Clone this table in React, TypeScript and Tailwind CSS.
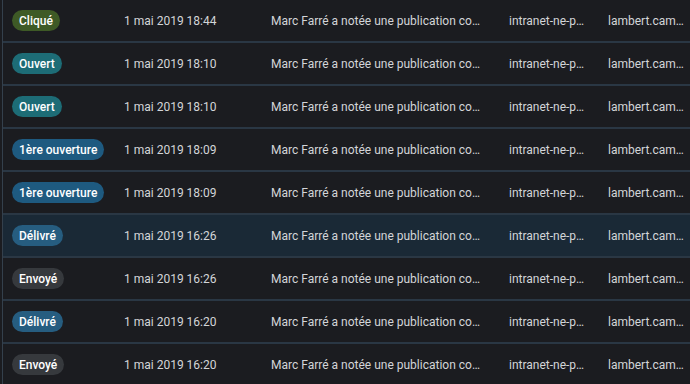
import React from "react";

type Status = "Cliqué" | "Ouvert" | "1ère ouverture" | "Délivré" | "Envoyé";

const badgeClass: Record<Status, string> = {
  "Cliqué": "bg-[#3e5a26]",
  "Ouvert": "bg-[#1d6c76]",
  "1ère ouverture": "bg-[#1e5a80]",
  "Délivré": "bg-[#265d80]",
  "Envoyé": "bg-[#36393d]",
};

const rows: { status: Status; date: string; active?: boolean }[] = [
  { status: "Cliqué", date: "1 mai 2019 18:44" },
  { status: "Ouvert", date: "1 mai 2019 18:10" },
  { status: "Ouvert", date: "1 mai 2019 18:10" },
  { status: "1ère ouverture", date: "1 mai 2019 18:09" },
  { status: "1ère ouverture", date: "1 mai 2019 18:09" },
  { status: "Délivré", date: "1 mai 2019 16:26", active: true },
  { status: "Envoyé", date: "1 mai 2019 16:26" },
  { status: "Délivré", date: "1 mai 2019 16:20" },
  { status: "Envoyé", date: "1 mai 2019 16:20" },
];

export default function App() {
  return (
    <div
      className="w-[690px] h-[384px] overflow-hidden bg-[#1b1c20] text-[12px] text-[#d3d5d8]"
      style={{ fontFamily: "Roboto, 'Liberation Sans', sans-serif" }}
    >
      <div className="border-l border-[#34404c] ml-[2px]">
        {rows.map((row, i) => (
          <div
            key={i}
            className={`flex items-center h-[43px] border-b-2 border-[#2a3744] ${
              row.active ? "bg-[#1a2936]" : ""
            }`}
          >
            {/* status */}
            <div className="w-[121px] pl-[9px] shrink-0">
              <span
                className={`inline-flex items-center h-[21px] px-[7px] rounded-full text-white font-medium ${badgeClass[row.status]}`}
              >
                {row.status}
              </span>
            </div>
            {/* date */}
            <div className="w-[147px] shrink-0 whitespace-nowrap">{row.date}</div>
            {/* message */}
            <div className="w-[238px] shrink-0 pr-[27px]">
              <div className="truncate">
                Marc Farré a notée une publication comme intéressante
              </div>
            </div>
            {/* site */}
            <div className="w-[99px] shrink-0 pr-[18px]">
              <div className="truncate">intranet-ne-pas-supprimer</div>
            </div>
            {/* email */}
            <div className="w-[82px] shrink-0 pr-[6px]">
              <div className="truncate">lambert.camille@exemple.fr</div>
            </div>
          </div>
        ))}
      </div>
    </div>
  );
}
